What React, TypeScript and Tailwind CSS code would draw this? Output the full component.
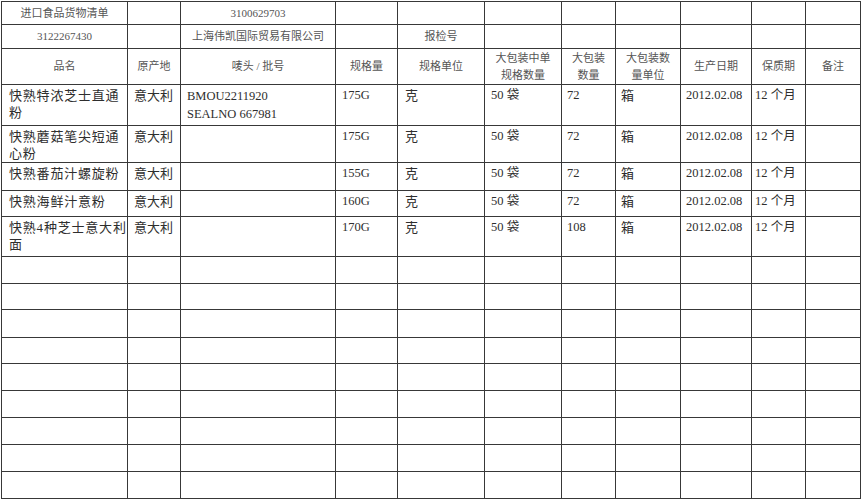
import React from "react";

type Item = {
  name: string[];
  origin: string;
  mark: string[];
  spec: string;
  unit: string;
  perBox: string;
  boxes: string;
  boxUnit: string;
  date: string;
  shelf: string;
  h: string;
};

const ITEMS: Item[] = [
  { name: ["快熟特浓芝士直通", "粉"], origin: "意大利", mark: ["BMOU2211920", "SEALNO 667981"], spec: "175G", unit: "克", perBox: "50 袋", boxes: "72", boxUnit: "箱", date: "2012.02.08", shelf: "12 个月", h: "h-[41px]" },
  { name: ["快熟蘑菇笔尖短通", "心粉"], origin: "意大利", mark: [], spec: "175G", unit: "克", perBox: "50 袋", boxes: "72", boxUnit: "箱", date: "2012.02.08", shelf: "12 个月", h: "h-[37px]" },
  { name: ["快熟番茄汁螺旋粉"], origin: "意大利", mark: [], spec: "155G", unit: "克", perBox: "50 袋", boxes: "72", boxUnit: "箱", date: "2012.02.08", shelf: "12 个月", h: "h-[28px]" },
  { name: ["快熟海鲜汁意粉"], origin: "意大利", mark: [], spec: "160G", unit: "克", perBox: "50 袋", boxes: "72", boxUnit: "箱", date: "2012.02.08", shelf: "12 个月", h: "h-[26px]" },
  { name: ["快熟4种芝士意大利", "面"], origin: "意大利", mark: [], spec: "170G", unit: "克", perBox: "50 袋", boxes: "108", boxUnit: "箱", date: "2012.02.08", shelf: "12 个月", h: "h-[40px]" },
];

const WIDTHS = [126, 53, 155, 62, 87, 77, 54, 65, 71, 54, 55];

const cell = "border border-[#383838] p-0";
const head = `${cell} text-center align-middle text-[11px] leading-[17px] text-[#555]`;
const data = `${cell} align-top pt-[2px] leading-[17px] text-[#2e2e2e]`;

export default function App() {
  return (
    <div className="w-[862px] h-[500px] bg-white pl-[1px] pt-[1px] font-['Liberation_Serif','Noto_Sans_CJK_SC',serif]">
      <table className="table-fixed border-collapse w-[859px]">
        <colgroup>
          {WIDTHS.map((w, i) => (
            <col key={i} style={{ width: w }} />
          ))}
        </colgroup>
        <tbody>
          {/* title rows */}
          <tr className="h-[23px]">
            <td className={head}>进口食品货物清单</td>
            <td className={head}></td>
            <td className={head}>3100629703</td>
            {Array.from({ length: 8 }).map((_, i) => (
              <td key={i} className={head}></td>
            ))}
          </tr>
          <tr className="h-[24px]">
            <td className={head}>3122267430</td>
            <td className={head}></td>
            <td className={head}>上海伟凯国际贸易有限公司</td>
            <td className={head}></td>
            <td className={head}>报检号</td>
            {Array.from({ length: 6 }).map((_, i) => (
              <td key={i} className={head}></td>
            ))}
          </tr>

          {/* column headers */}
          <tr className="h-[36px]">
            <td className={head}>品名</td>
            <td className={head}>原产地</td>
            <td className={head}>唛头 / 批号</td>
            <td className={head}>规格量</td>
            <td className={head}>规格单位</td>
            <td className={head}>
              大包装中单
              <br />
              规格数量
            </td>
            <td className={head}>
              大包装
              <br />
              数量
            </td>
            <td className={head}>
              大包装数
              <br />
              量单位
            </td>
            <td className={head}>生产日期</td>
            <td className={head}>保质期</td>
            <td className={head}>备注</td>
          </tr>

          {ITEMS.map((it, i) => (
            <tr key={i} className={it.h}>
              <td className={`${data} pl-[7px] text-[13px] tracking-[0.8px]`}>
                {it.name.map((l, j) => (
                  <div key={j}>{l}</div>
                ))}
              </td>
              <td className={`${data} pl-[6px] text-[13px]`}>{it.origin}</td>
              <td className={`${data} pl-[6px] text-[12.5px] leading-[18px] text-[#1f1f1f]`}>
                {it.mark.map((l, j) => (
                  <div key={j}>{l}</div>
                ))}
              </td>
              <td className={`${data} pl-[6px] text-[12.5px]`}>{it.spec}</td>
              <td className={`${data} pl-[7px] text-[13px]`}>{it.unit}</td>
              <td className={`${data} pl-[6px] text-[12.5px]`}>{it.perBox}</td>
              <td className={`${data} pl-[5px] text-[12.5px]`}>{it.boxes}</td>
              <td className={`${data} pl-[5px] text-[13px]`}>{it.boxUnit}</td>
              <td className={`${data} pl-[5px] text-[12.5px]`}>{it.date}</td>
              <td className={`${data} pl-[3px] text-[12.5px]`}>{it.shelf}</td>
              <td className={data}></td>
            </tr>
          ))}

          {/* blank rows */}
          {[27, 26, 28, 26, 27, 27, 27, 27, 27].map((h, i) => (
            <tr key={i} style={{ height: h }}>
              {WIDTHS.map((_, j) => (
                <td key={j} className={cell}></td>
              ))}
            </tr>
          ))}
        </tbody>
      </table>
    </div>
  );
}
